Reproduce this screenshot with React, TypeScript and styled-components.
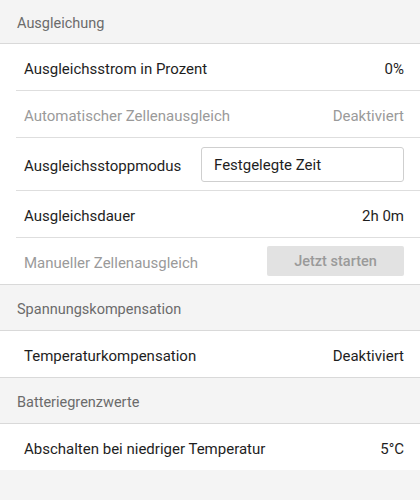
import styled, { createGlobalStyle } from 'styled-components';

const GlobalStyle = createGlobalStyle`
  html, body {
    margin: 0;
    padding: 0;
    background: #f4f4f4;
    font-family: Roboto, "Liberation Sans", sans-serif;
  }
`;

type Item =
  | { kind: 'value'; label: string; value: string; disabled?: boolean }
  | { kind: 'select'; label: string; value: string }
  | { kind: 'button'; label: string; action: string; disabled?: boolean };

interface Section {
  title: string;
  items: Item[];
}

const sections: Section[] = [
  {
    title: 'Ausgleichung',
    items: [
      { kind: 'value', label: 'Ausgleichsstrom in Prozent', value: '0%' },
      { kind: 'value', label: 'Automatischer Zellenausgleich', value: 'Deaktiviert', disabled: true },
      { kind: 'select', label: 'Ausgleichsstoppmodus', value: 'Festgelegte Zeit' },
      { kind: 'value', label: 'Ausgleichsdauer', value: '2h 0m' },
      { kind: 'button', label: 'Manueller Zellenausgleich', action: 'Jetzt starten', disabled: true },
    ],
  },
  {
    title: 'Spannungskompensation',
    items: [{ kind: 'value', label: 'Temperaturkompensation', value: 'Deaktiviert' }],
  },
  {
    title: 'Batteriegrenzwerte',
    items: [{ kind: 'value', label: 'Abschalten bei niedriger Temperatur', value: '5°C' }],
  },
];

const App = () => {
  return (
    <>
      <GlobalStyle />
      <PageS>
        {sections.map((section, i) => (
          <div key={section.title}>
            <SectionHeaderS first={i === 0}>{section.title}</SectionHeaderS>
            <ListS>
              {section.items.map((item, j) => (
                <RowS key={item.label} last={j === section.items.length - 1} tall={item.kind === 'select'}>
                  <LabelS disabled={'disabled' in item && !!item.disabled}>{item.label}</LabelS>
                  {item.kind === 'value' && <ValueS disabled={!!item.disabled}>{item.value}</ValueS>}
                  {item.kind === 'select' && <SelectBoxS>{item.value}</SelectBoxS>}
                  {item.kind === 'button' && <ActionButtonS disabled={item.disabled}>{item.action}</ActionButtonS>}
                </RowS>
              ))}
            </ListS>
          </div>
        ))}
      </PageS>
    </>
  );
};

export default App;

const PageS = styled.div`
  width: 420px;
  min-height: 500px;
  background: #f4f4f4;
`;

const SectionHeaderS = styled.div<{ first: boolean }>`
  height: ${(p) => (p.first ? 44 : 47)}px;
  display: flex;
  align-items: center;
  padding: 4px 0 0 17px;
  font-size: 14.5px;
  color: #6b6b6b;
  border-bottom: 1px solid #d9d9d9;
  ${(p) => (p.first ? '' : 'border-top: 1px solid #d9d9d9;')}
  box-sizing: border-box;
`;

const ListS = styled.div`
  background: #fff;
`;

const RowS = styled.div<{ last: boolean; tall: boolean }>`
  box-sizing: border-box;
  height: ${(p) => (p.tall ? 53 : p.last ? 46 : 47)}px;
  margin-left: 16px;
  padding: 0 16px 0 8px;
  display: flex;
  align-items: center;
  justify-content: space-between;
  border-bottom: ${(p) => (p.last ? 'none' : '1px solid #dedede')};
`;

const LabelS = styled.span<{ disabled: boolean }>`
  padding-top: 4px;
  font-size: 15px;
  color: ${(p) => (p.disabled ? '#9a9a9a' : '#1e1e1e')};
`;

const ValueS = styled.span<{ disabled: boolean }>`
  padding-top: 4px;
  font-size: 15px;
  color: ${(p) => (p.disabled ? '#9a9a9a' : '#1e1e1e')};
`;

const SelectBoxS = styled.div`
  width: 203px;
  height: 35px;
  box-sizing: border-box;
  border: 1px solid #cfcfcf;
  border-radius: 3px;
  display: flex;
  align-items: center;
  padding: 2px 0 0 12px;
  font-size: 15px;
  color: #1e1e1e;
  background: #fff;
`;

const ActionButtonS = styled.button`
  width: 137px;
  height: 30px;
  border: none;
  border-radius: 2px;
  background: #e2e2e2;
  color: #9a9a9a;
  font-family: Roboto, "Liberation Sans", sans-serif;
  font-size: 14.5px;
  font-weight: 500;
  padding: 0;
`;
